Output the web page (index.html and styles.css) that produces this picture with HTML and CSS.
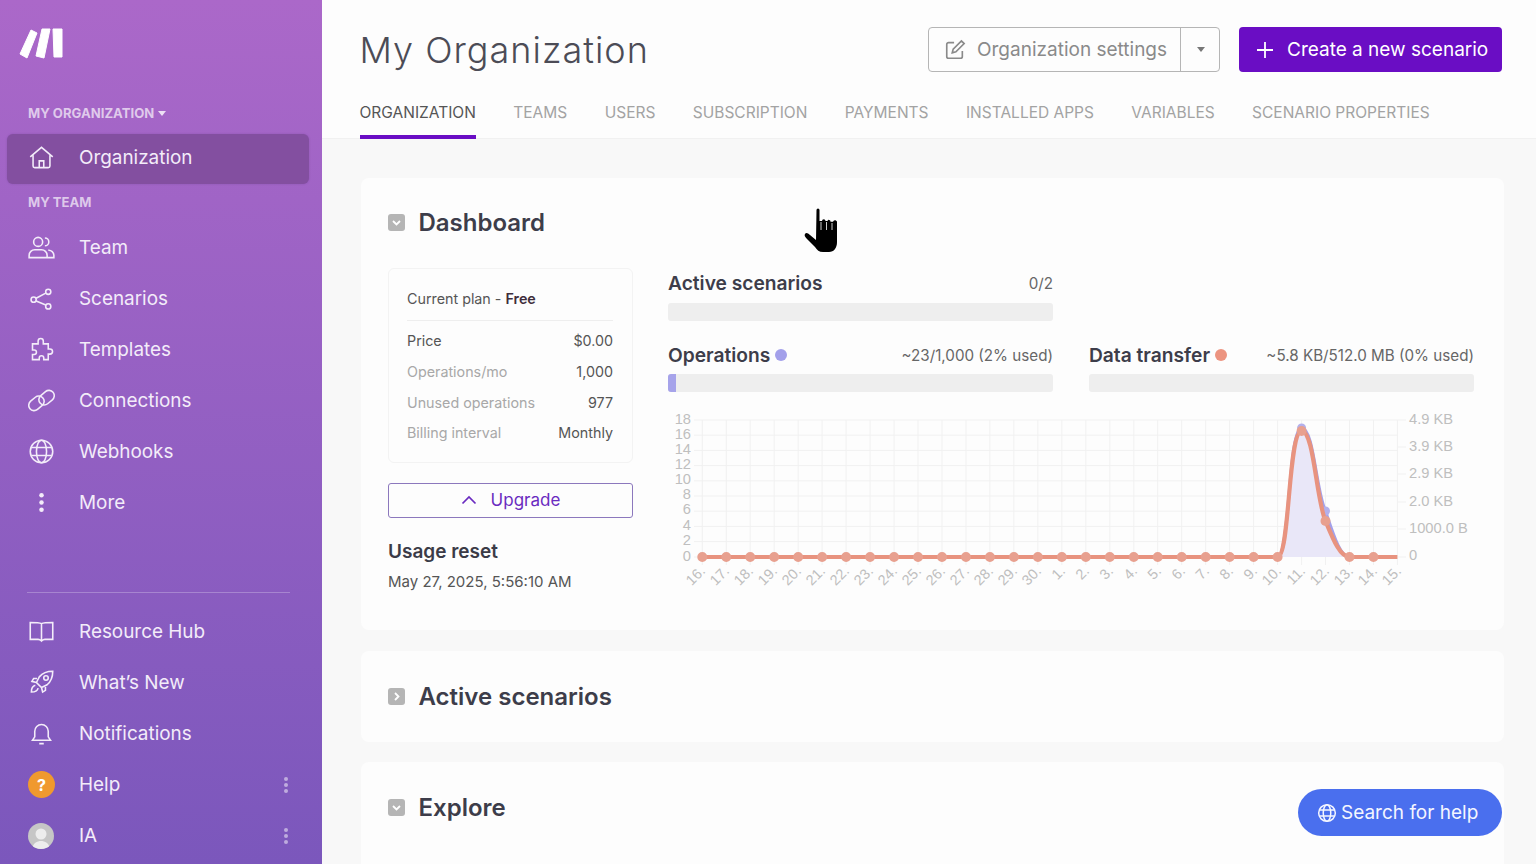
FILE: index.html
```html
<!DOCTYPE html>
<html lang="en">

<head>
    <meta charset="UTF-8">
    <meta name="viewport" content="width=device-width, initial-scale=1.0">
    <title>My Organization</title>
    <link rel="stylesheet" href="styles.css">
</head>

<body>
    <aside class="sidebar">
        <div class="logo">
            <svg width="44" height="32" viewBox="0 0 44 32">
                <path d="M1 26 12 2l6 3L8 30zM17 28 23 1h8l-6 29zM34 1h9v28h-8z" fill="#fff" stroke="#fff" stroke-width="1" stroke-linejoin="round"/>
            </svg>
        </div>

        <div class="nav-label nav-label-org">MY ORGANIZATION <span class="caret"></span></div>
        <a class="nav-item active">
            <svg class="nav-icon" viewBox="0 0 24 24"><path d="M2 11.500 12 3l10 8.500M4.500 10v9.500a1.500 1.500 0 0 0 1.500 1.500h12a1.500 1.500 0 0 0 1.500-1.500V10M10 21v-6h4v6"/></svg>
            Organization
        </a>

        <div class="nav-label nav-label-team">MY TEAM</div>
        <a class="nav-item">
            <svg class="nav-icon" viewBox="0 0 24 24"><circle cx="9" cy="7" r="4"/><path d="M15 3.500a3.500 3.500 0 0 1 0 7M1 21v-2a5 5 0 0 1 5-5h6a5 5 0 0 1 5 5v2zM18 14.500a4.500 4.500 0 0 1 5 4.500v2h-6"/></svg>
            Team
        </a>
        <a class="nav-item">
            <svg class="nav-icon" viewBox="0 0 24 24"><circle cx="5" cy="13" r="2.300"/><circle cx="18" cy="6" r="2.300"/><circle cx="18" cy="19" r="2.300"/><path d="M7.200 11.800 15.800 7.200M7.200 14.200 15.800 17.800"/></svg>
            Scenarios
        </a>
        <a class="nav-item">
            <svg class="nav-icon" viewBox="0 0 24 24"><path d="M9 4.500a2.300 2.300 0 1 1 4.600 0V7H18v4.500h1.500a2.300 2.300 0 0 1 0 4.600H18V21h-4v-1.500a2 2 0 1 0-4 0V21H4v-4.500h1.500a2 2 0 1 0 0-4H4V7h5z"/></svg>
            Templates
        </a>
        <a class="nav-item">
            <svg class="nav-icon" viewBox="0 0 24 24"><rect x="0" y="9.750" width="15" height="9.500" rx="4.750" transform="rotate(-40 7.500 14.500)"/><rect x="9" y="4.750" width="15" height="9.500" rx="4.750" transform="rotate(-40 16.500 9.500)"/></svg>
            Connections
        </a>
        <a class="nav-item">
            <svg class="nav-icon" viewBox="0 0 24 24"><circle cx="12" cy="12" r="10"/><ellipse cx="12" cy="12" rx="4.500" ry="10"/><path d="M3 8.500h18M3 15.500h18"/></svg>
            Webhooks
        </a>
        <a class="nav-item">
            <svg class="nav-icon nav-icon-fill" viewBox="0 0 24 24"><circle cx="12" cy="5.500" r="2"/><circle cx="12" cy="12" r="2"/><circle cx="12" cy="18.500" r="2"/></svg>
            More
        </a>

        <div class="sidebar-bottom">
            <a class="nav-item">
                <svg class="nav-icon" viewBox="0 0 24 24"><path d="M12 5C10 4 4 4 2 4v15h7c1 0 2 .5 3 1.500 1-1 2-1.500 3-1.500h7V4c-2 0-8 0-10 1zM12 5v15.500"/></svg>
                Resource Hub
            </a>
            <a class="nav-item">
                <svg class="nav-icon" viewBox="0 0 24 24"><path d="M22 2c-5 0-9 1.500-12 5l-2.500 5 4.500 4.500 5-2.500c3.500-3 5-7 5-12zM8 8.500H5L3.500 11l4 1M15.500 16v3L13 20.500l-1-4"/><circle cx="16" cy="8" r="2"/><path d="M6.500 14.500c-2 .5-3.500 2.500-3.500 6 3.500 0 5.500-1.500 6-3.500"/></svg>
                What’s New
            </a>
            <a class="nav-item">
                <svg class="nav-icon" viewBox="0 0 24 24"><path d="M6 15V10a6 6 0 0 1 12 0v5l2 3H4zM10 21h4"/></svg>
                Notifications
            </a>
            <a class="nav-item">
                <span class="help-badge">?</span>
                Help
                <span class="kebab"><i></i><i></i><i></i></span>
            </a>
            <a class="nav-item">
                <span class="avatar">
                    <svg viewBox="0 0 26 26" width="26" height="26"><circle cx="13" cy="11" r="5.500" fill="#ededed"/><path d="M4 26c1-6 5-8 9-8s8 2 9 8z" fill="#ededed"/></svg>
                </span>
                IA
                <span class="kebab"><i></i><i></i><i></i></span>
            </a>
        </div>
    </aside>

    <main class="main">
        <header class="page-header">
            <div class="header-top">
                <h1>My Organization</h1>
                <div class="header-actions">
                    <div class="split-btn">
                        <div class="split-main">
                            <svg class="edit-icon" viewBox="0 0 24 24"><path d="M11 4H5a2 2 0 0 0-2 2v13a2 2 0 0 0 2 2h13a2 2 0 0 0 2-2v-6M9 15l1-4L19 2l3 3-9 9z"/></svg>
                            Organization settings
                        </div>
                        <div class="split-caret"><span class="caret caret-dark"></span></div>
                    </div>
                    <button class="create-btn">
                        <svg width="18" height="18" viewBox="0 0 18 18"><path d="M9 1v16M1 9h16" stroke="#fff" stroke-width="1.800"/></svg>
                        Create a new scenario
                    </button>
                </div>
            </div>
            <nav class="tabs">
                <a class="tab active">ORGANIZATION</a>
                <a class="tab">TEAMS</a>
                <a class="tab">USERS</a>
                <a class="tab">SUBSCRIPTION</a>
                <a class="tab">PAYMENTS</a>
                <a class="tab">INSTALLED APPS</a>
                <a class="tab">VARIABLES</a>
                <a class="tab">SCENARIO PROPERTIES</a>
            </nav>
        </header>

        <div class="content">
            <section class="card card-dashboard">
                <div class="card-title">
                    <span class="toggle"><svg viewBox="0 0 17 17" width="17" height="17"><path d="M5 7l3.500 3.500L12 7" fill="none" stroke="#fff" stroke-width="1.800"/></svg></span>
                    <h2>Dashboard</h2>
                </div>

                <div class="dashboard-body">
                    <div class="plan-col">
                        <div class="plan-box">
                            <div class="plan-head">Current plan - <b>Free</b></div>
                            <div class="plan-row first"><span>Price</span><span>$0.00</span></div>
                            <div class="plan-row"><span class="muted">Operations/mo</span><span>1,000</span></div>
                            <div class="plan-row"><span class="muted">Unused operations</span><span>977</span></div>
                            <div class="plan-row"><span class="muted">Billing interval</span><span>Monthly</span></div>
                        </div>
                        <button class="upgrade-btn">
                            <svg width="16" height="10" viewBox="0 0 16 10"><path d="M1.500 8.500 8 2l6.500 6.500" fill="none" stroke="#6a2bc0" stroke-width="1.700"/></svg>
                            Upgrade
                        </button>
                        <div class="usage-title">Usage reset</div>
                        <div class="usage-date">May 27, 2025, 5:56:10 AM</div>
                    </div>

                    <div class="stats-col">
                        <div class="stats-grid">
                            <div class="stat">
                                <div class="stat-head"><h3>Active scenarios</h3><span>0/2</span></div>
                                <div class="bar"></div>
                            </div>
                            <div></div>
                            <div class="stat stat-low">
                                <div class="stat-head"><h3>Operations <i class="dot dot-blue"></i></h3><span>~23/1,000 (2% used)</span></div>
                                <div class="bar"><div class="bar-fill" style="width: 2%"></div></div>
                            </div>
                            <div class="stat stat-low">
                                <div class="stat-head"><h3>Data transfer <i class="dot dot-orange"></i></h3><span>~5.8 KB/512.0 MB (0% used)</span></div>
                                <div class="bar"></div>
                            </div>
                        </div>

                        <svg class="chart" width="805" height="180" viewBox="0 0 805 180">
                            <g class="grid">
                                <path d="M26 9H730M26 24.200H730M26 39.400H730M26 54.600H730M26 69.800H730M26 85H730M26 100.200H730M26 115.400H730M26 130.600H730"/>
                                <path d="M34.300 9V154M58.300 9V154M82.200 9V154M106.200 9V154M130.200 9V154M154.100 9V154M178.100 9V154M202.100 9V154M226.100 9V154M250 9V154M274 9V154M298 9V154M321.900 9V154M345.900 9V154M369.900 9V154M393.900 9V154M417.800 9V154M441.800 9V154M465.800 9V154M489.700 9V154M513.700 9V154M537.700 9V154M561.600 9V154M585.600 9V154M609.600 9V154M633.600 9V154M657.500 9V154M681.500 9V154M705.500 9V154M729.400 9V154"/>
                                <path d="M730 9H738M730 36H738M730 63H738M730 91H738M730 118H738M730 146H738M26 146H34"/>
                            </g>
                            <g class="y-labels" transform="translate(0 -1)">
                                <text x="23" y="14">18</text>
                                <text x="23" y="29">16</text>
                                <text x="23" y="44">14</text>
                                <text x="23" y="59">12</text>
                                <text x="23" y="74">10</text>
                                <text x="23" y="89">8</text>
                                <text x="23" y="104">6</text>
                                <text x="23" y="120">4</text>
                                <text x="23" y="135">2</text>
                                <text x="23" y="151">0</text>
                            </g>
                            <g class="y2-labels" transform="translate(0 -1)">
                                <text x="741" y="14">4.9 KB</text>
                                <text x="741" y="41">3.9 KB</text>
                                <text x="741" y="68">2.9 KB</text>
                                <text x="741" y="96">2.0 KB</text>
                                <text x="741" y="123">1000.0 B</text>
                                <text x="741" y="150">0</text>
                            </g>
                            <path d="M609.600 146C622 146 620 17 633.600 17 646 17 648 80 657.500 100 665 122 672 146 681.500 146z" fill="#e9e7f8"/>
                            <path d="M609.600 146C622 146 620 17 633.600 17 646 17 648 80 657.500 100 665 122 672 146 681.500 146" fill="none" stroke="#a3a0ea" stroke-width="3"/>
                            <circle cx="633.600" cy="17" r="4.500" fill="#b3b0ec"/>
                            <circle cx="657.500" cy="100" r="4.500" fill="#b3b0ec"/>
                            <path d="M34.300 146H609.600C622 146 620 20 633.600 20 646 20 648 88 657.500 110 665 128 672 146 681.500 146H729.400" fill="none" stroke="#e8937f" stroke-width="4.200"/>
                            <path class="chart-dots" d="M34.300 146H609.600M681.500 146H729.400"/>
                            <circle cx="633.600" cy="20" r="5" fill="#e8a08f"/>
                            <circle cx="657.500" cy="110" r="5" fill="#e8a08f"/>
                            <g class="x-labels">
                                <text transform="translate(38 161) rotate(-45)">16.</text>
                                <text transform="translate(62 161) rotate(-45)">17.</text>
                                <text transform="translate(86 161) rotate(-45)">18.</text>
                                <text transform="translate(110 161) rotate(-45)">19.</text>
                                <text transform="translate(134 161) rotate(-45)">20.</text>
                                <text transform="translate(158 161) rotate(-45)">21.</text>
                                <text transform="translate(182 161) rotate(-45)">22.</text>
                                <text transform="translate(206 161) rotate(-45)">23.</text>
                                <text transform="translate(230 161) rotate(-45)">24.</text>
                                <text transform="translate(254 161) rotate(-45)">25.</text>
                                <text transform="translate(278 161) rotate(-45)">26.</text>
                                <text transform="translate(302 161) rotate(-45)">27.</text>
                                <text transform="translate(326 161) rotate(-45)">28.</text>
                                <text transform="translate(350 161) rotate(-45)">29.</text>
                                <text transform="translate(374 161) rotate(-45)">30.</text>
                                <text transform="translate(398 161) rotate(-45)">1.</text>
                                <text transform="translate(422 161) rotate(-45)">2.</text>
                                <text transform="translate(446 161) rotate(-45)">3.</text>
                                <text transform="translate(470 161) rotate(-45)">4.</text>
                                <text transform="translate(494 161) rotate(-45)">5.</text>
                                <text transform="translate(518 161) rotate(-45)">6.</text>
                                <text transform="translate(542 161) rotate(-45)">7.</text>
                                <text transform="translate(566 161) rotate(-45)">8.</text>
                                <text transform="translate(590 161) rotate(-45)">9.</text>
                                <text transform="translate(614 161) rotate(-45)">10.</text>
                                <text transform="translate(638 161) rotate(-45)">11.</text>
                                <text transform="translate(662 161) rotate(-45)">12.</text>
                                <text transform="translate(686 161) rotate(-45)">13.</text>
                                <text transform="translate(710 161) rotate(-45)">14.</text>
                                <text transform="translate(734 161) rotate(-45)">15.</text>
                            </g>
                        </svg>
                    </div>
                </div>
            </section>

            <section class="card card-small">
                <div class="card-title">
                    <span class="toggle"><svg viewBox="0 0 17 17" width="17" height="17"><path d="M7 5l3.500 3.500L7 12" fill="none" stroke="#fff" stroke-width="1.800"/></svg></span>
                    <h2>Active scenarios</h2>
                </div>
            </section>

            <section class="card card-last">
                <div class="card-title">
                    <span class="toggle"><svg viewBox="0 0 17 17" width="17" height="17"><path d="M5 7l3.500 3.500L12 7" fill="none" stroke="#fff" stroke-width="1.800"/></svg></span>
                    <h2>Explore</h2>
                </div>
            </section>
        </div>
    </main>

    <button class="help-btn">
        <svg class="help-globe" viewBox="0 0 24 24"><circle cx="12" cy="12" r="10"/><ellipse cx="12" cy="12" rx="4.500" ry="10"/><path d="M3 8.500h18M3 15.500h18"/></svg>
        Search for help
    </button>

    <svg class="hand-cursor" width="80" height="80" viewBox="0 0 80 80">
        <path d="M36.500 20a1.500 1.500 0 0 1 3 0V31h2.500a1.700 1.700 0 0 1 3.500 0h2a1.500 1.500 0 0 1 3 .8h2.500a2 2 0 0 1 4 1V52c0 6-3 10-8 10h-6c-4 0-6-2-8-5l-8-8c-2-2-3-4-2-5 1-2 3-1 5 1l6 5z" fill="#000" stroke="#fff" stroke-width="1.500" paint-order="stroke"/>
        <path d="M41 32V40M46.500 32V40M52 33V40" stroke="#fff" stroke-width="0.800" fill="none"/>
    </svg>
</body>

</html>
```

FILE: styles.css
```css
* {
    margin: 0;
    padding: 0;
    box-sizing: border-box;
}

html, body {
    height: 100%;
    overflow: hidden;
}

body {
    font-family: Inter, 'Noto Sans', sans-serif;
    background: #f8f8f8;
    display: flex;
    color: #3b3b47;
}

/* sidebar */
.sidebar {
    width: 322px;
    height: 864px;
    flex-shrink: 0;
    display: flex;
    flex-direction: column;
    background: linear-gradient(180deg, #ab68c9 0%, #7b57bc 100%);
    color: #f3ecf9;
}

.logo {
    padding: 28px 0 0 19px;
    height: 105px;
}

.nav-label {
    font-size: 13.100px;
    font-weight: 700;
    color: rgba(255, 255, 255, 0.66);
    padding-left: 28px;
    height: 18px;
    line-height: 18px;
}

.nav-label-org {
    margin-bottom: 12px;
    margin-top: -1px;
}

.nav-label-team {
    margin-bottom: 11px;
}

.caret {
    display: inline-block;
    width: 0;
    height: 0;
    margin-left: 1px;
    border-left: 4.5px solid transparent;
    border-right: 4.5px solid transparent;
    border-top: 5px solid rgba(255, 255, 255, 0.8);
    vertical-align: 2px;
}

.caret-dark {
    border-top-color: #777;
    vertical-align: 3px;
}

.nav-item {
    display: flex;
    align-items: center;
    gap: 24px;
    height: 51px;
    margin: 0 13px 0 7px;
    padding: 0 24px 0 21px;
    font-size: 18.900px;
    flex-shrink: 0;
}

.nav-item.active {
    height: 50px;
    margin-bottom: 9px;
    padding-bottom: 3px;
    background: #834fa0;
    border-radius: 6px;
    box-shadow: 0 0 2px rgba(80, 40, 120, 0.3);
}

.nav-icon {
    width: 27px;
    height: 27px;
    fill: none;
    stroke: #f3ecf9;
    stroke-width: 1.400;
    flex-shrink: 0;
}

.nav-icon-fill {
    fill: #f3ecf9;
    stroke: none;
}

.sidebar-bottom {
    margin-top: 63px;
    padding-top: 13px;
}

.sidebar-bottom::before {
    content: "";
    display: block;
    height: 1px;
    margin: -12px 32px 13px 27px;
    background: rgba(255, 255, 255, 0.25);
}

.help-badge {
    width: 27px;
    height: 27px;
    border-radius: 50%;
    background: #f0992e;
    color: #fff;
    font-size: 16px;
    font-weight: 700;
    display: flex;
    align-items: center;
    justify-content: center;
    flex-shrink: 0;
}

.avatar {
    width: 26px;
    height: 26px;
    border-radius: 50%;
    background: #c6c6c6;
    overflow: hidden;
    flex-shrink: 0;
    margin-right: 1px;
}

.kebab {
    margin-left: auto;
    margin-right: -3px;
    display: flex;
    flex-direction: column;
    gap: 2px;
}

.kebab i {
    width: 4px;
    height: 4px;
    border-radius: 50%;
    background: rgba(255, 255, 255, 0.5);
}

/* page header */
.main {
    flex: 1;
    min-width: 0;
    height: 864px;
    display: flex;
    flex-direction: column;
}

.page-header {
    height: 139px;
    flex-shrink: 0;
    background: #fdfdfd;
    border-bottom: 1px solid #f1f1f1;
    padding: 27px 34px 0 37.500px;
}

.header-top {
    display: flex;
    justify-content: space-between;
    height: 45px;
}

h1 {
    font-size: 36px;
    font-weight: 300;
    color: #4c4c56;
    line-height: 46px;
    letter-spacing: 1px;
}

.header-actions {
    display: flex;
    gap: 19px;
}

.split-btn {
    width: 292px;
    display: flex;
    border: 1px solid #b5b5b5;
    border-radius: 4px;
    color: #8a8a8a;
    font-size: 19px;
}

.split-main {
    flex: 1;
    display: flex;
    align-items: center;
    gap: 11px;
    padding-left: 15px;
    border-right: 1px solid #b5b5b5;
}

.edit-icon {
    width: 22px;
    height: 22px;
    fill: none;
    stroke: #8a8a8a;
    stroke-width: 1.800;
}

.split-caret {
    width: 38px;
    display: flex;
    align-items: center;
    justify-content: center;
}

.create-btn {
    width: 263px;
    display: flex;
    align-items: center;
    gap: 13px;
    padding-left: 17px;
    border: none;
    border-radius: 4px;
    background: #6a0dc4;
    color: #fff;
    font-family: inherit;
    font-size: 19px;
}

.tabs {
    display: flex;
    gap: 37.400px;
    margin-top: 18px;
}

.tab {
    height: 49px;
    padding-top: 13px;
    font-size: 15.500px;
    color: #a3a3a3;
}

.tab.active {
    color: #555;
    border-bottom: 4px solid #6a0dc4;
}

/* cards */
.content {
    flex: 1;
    min-height: 0;
    padding: 39px 32px 0 39px;
    display: flex;
    flex-direction: column;
    gap: 21px;
}

.card {
    background: #fdfdfd;
    border-radius: 8px;
    padding: 0 27px;
}

.card-dashboard {
    height: 452px;
    padding-top: 30px;
    flex-shrink: 0;
}

.card-small {
    height: 91px;
    padding-top: 31px;
    flex-shrink: 0;
}

.card-last {
    flex: 1;
    min-height: 0;
    margin-top: -1px;
    padding-top: 31px;
    border-radius: 8px 8px 0 0;
}

.card-title {
    display: flex;
    align-items: center;
    gap: 13.500px;
    height: 28px;
}

.card-title h2 {
    font-size: 24px;
    font-weight: 600;
    color: #3d3d4a;
}

.toggle {
    width: 17px;
    height: 17px;
    background: #b5b5b5;
    border-radius: 3px;
    display: block;
}

.dashboard-body {
    display: flex;
    gap: 35px;
    margin-top: 32px;
}

/* plan column */
.plan-col {
    width: 245px;
    flex-shrink: 0;
}

.plan-box {
    height: 195px;
    border: 1px solid #f3f3f3;
    border-radius: 6px;
    padding: 0 19px 0 18px;
    font-size: 14.300px;
    color: #555;
}

.plan-head {
    height: 52px;
    line-height: 60px;
    border-bottom: 1px solid #eee;
}

.plan-head b {
    color: #3f2d3b;
    font-weight: 600;
}

.plan-row {
    display: flex;
    justify-content: space-between;
    align-items: center;
    height: 30.700px;
}

.plan-row.first {
    margin-top: 4.500px;
}

.muted {
    color: #a8a8a8;
}

.upgrade-btn {
    width: 245px;
    height: 35px;
    margin-top: 20px;
    padding-bottom: 2px;
    display: flex;
    align-items: center;
    justify-content: center;
    gap: 14px;
    background: #fdfdfd;
    border: 1px solid #8c78bd;
    border-radius: 3px;
    color: #6a2bc0;
    font-family: inherit;
    font-size: 17px;
}

.usage-title {
    margin-top: 21px;
    font-size: 19px;
    font-weight: 600;
    line-height: 26px;
}

.usage-date {
    margin-top: 7px;
    font-size: 15px;
    color: #555;
    line-height: 20px;
}

/* stats column */
.stats-col {
    flex: 1;
    min-width: 0;
}

.stats-grid {
    display: grid;
    grid-template-columns: 385px 385px;
    column-gap: 36px;
    row-gap: 20px;
    margin-top: 2px;
}

.stat-head {
    display: flex;
    justify-content: space-between;
    align-items: center;
    height: 26px;
    font-size: 15.200px;
    color: #666;
}

.stat-head h3 {
    font-size: 19.200px;
    font-weight: 600;
    color: #3d3d4a;
    display: flex;
    align-items: center;
    gap: 5px;
}

.bar {
    height: 18px;
    margin-top: 7px;
    background: #eeeeee;
    border-radius: 3px;
    overflow: hidden;
}

.stat-low .stat-head {
    height: 28px;
}

.stat-low .bar {
    margin-top: 5px;
}

.bar-fill {
    height: 100%;
    background: #a6a3ea;
}

.dot {
    width: 12px;
    height: 12px;
    border-radius: 50%;
    display: block;
}

.dot-blue {
    background: #a3a0ea;
}

.dot-orange {
    background: #ec9480;
}

/* chart */
.chart {
    display: block;
    margin-top: 19px;
    font-family: 'Liberation Sans', Arial, sans-serif;
    font-size: 14.700px;
    fill: #bfbfbf;
}

.grid path {
    fill: none;
    stroke: #f1f1f1;
    stroke-width: 1;
}

.y-labels text {
    text-anchor: end;
}

.x-labels text {
    text-anchor: end;
    font-size: 14.500px;
}

.chart-dots {
    fill: none;
    stroke: #e8a08f;
    stroke-width: 10;
    stroke-linecap: round;
    stroke-dasharray: 0 23.970;
}

/* floating */
.help-btn {
    position: fixed;
    left: 1298px;
    top: 789px;
    width: 204px;
    height: 47px;
    padding-left: 19px;
    display: flex;
    align-items: center;
    gap: 4px;
    border: none;
    border-radius: 24px;
    background: #4a6fee;
    color: #f4f6ff;
    font-family: inherit;
    font-size: 19px;
}

.help-globe {
    width: 20px;
    height: 20px;
    fill: none;
    stroke: #f4f6ff;
    stroke-width: 1.800;
}

.hand-cursor {
    position: fixed;
    left: 780px;
    top: 190px;
}
```
